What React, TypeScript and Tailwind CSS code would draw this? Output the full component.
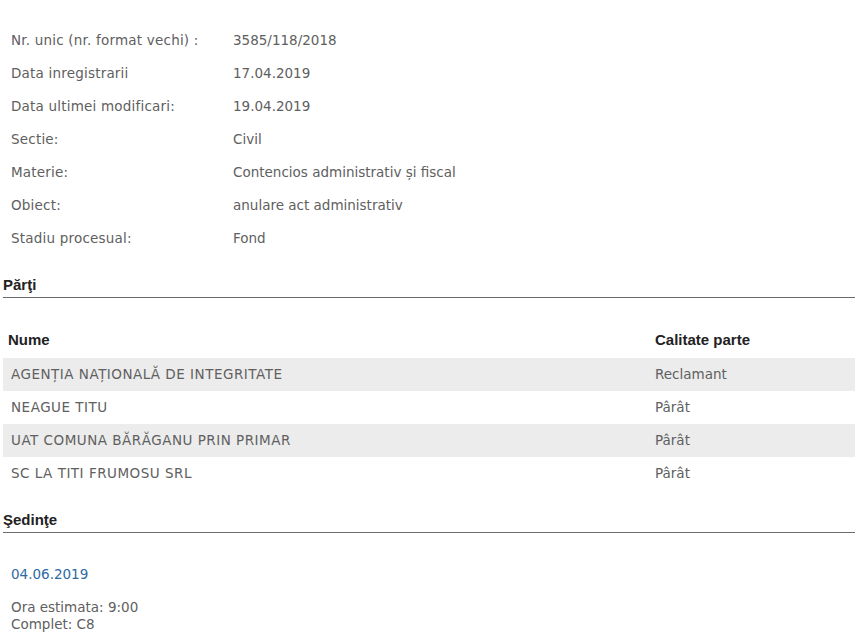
import React from "react";

const details: [string, string][] = [
  ["Nr. unic (nr. format vechi) :", "3585/118/2018"],
  ["Data inregistrarii", "17.04.2019"],
  ["Data ultimei modificari:", "19.04.2019"],
  ["Sectie:", "Civil"],
  ["Materie:", "Contencios administrativ și fiscal"],
  ["Obiect:", "anulare act administrativ"],
  ["Stadiu procesual:", "Fond"],
];

const parti: [string, string][] = [
  ["AGENȚIA NAȚIONALĂ DE INTEGRITATE", "Reclamant"],
  ["NEAGUE TITU", "Pârât"],
  ["UAT COMUNA BĂRĂGANU PRIN PRIMAR", "Pârât"],
  ["SC LA TITI FRUMOSU SRL", "Pârât"],
];

const SectionTitle = ({ title }: { title: string }) => (
  <div className="ml-[3px] border-b border-[#6b6b6b] h-[23px] font-['Liberation_Sans',Arial,sans-serif] font-bold text-[15px] leading-[20px] text-[#222]">
    {title}
  </div>
);

const App = () => {
  return (
    <div className="w-[855px] h-[635px] overflow-hidden bg-white font-['DejaVu_Sans',sans-serif] text-[13.5px] text-[#606060]">
      <div className="pt-[24px]">
        {details.map(([label, value]) => (
          <div key={label} className="flex h-[33px] items-center">
            <span className="w-[233px] pl-[11px] tracking-[0.2px]">{label}</span>
            <span>{value}</span>
          </div>
        ))}
      </div>

      <div className="mt-[20px]">
        <SectionTitle title="Părţi" />
      </div>

      <div className="ml-[3px] mt-[24px]">
        <div className="flex h-[36px] items-center font-['Liberation_Sans',Arial,sans-serif] font-bold text-[15px] text-[#222]">
          <span className="w-[652px] pl-[5px]">Nume</span>
          <span>Calitate parte</span>
        </div>
        {parti.map(([name, role], i) => (
          <div
            key={name}
            className={`flex h-[33px] items-center ${i % 2 === 0 ? "bg-[#ececec]" : "bg-white"}`}
          >
            <span className="w-[652px] pl-[8px] tracking-[0.5px]">{name}</span>
            <span>{role}</span>
          </div>
        ))}
      </div>

      <div className="mt-[20px]">
        <SectionTitle title="Şedinţe" />
      </div>

      <div className="pl-[11px] pt-[31px]">
        <div className="text-[#2d6aa3] leading-[20px]">04.06.2019</div>
        <div className="mt-[15px] leading-[17px]">
          <div>Ora estimata: 9:00</div>
          <div>Complet: C8</div>
        </div>
      </div>
    </div>
  );
};

export default App;
